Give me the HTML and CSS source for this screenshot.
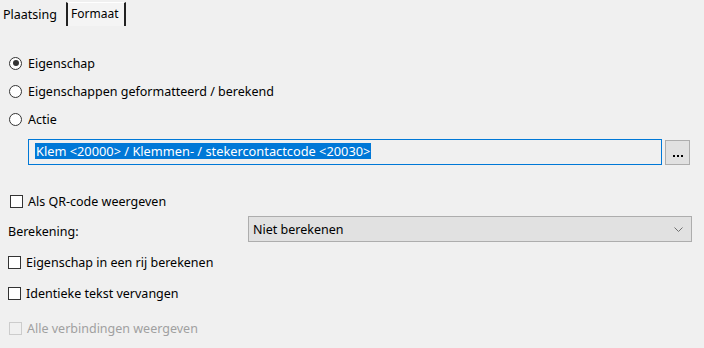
FILE: index.html
```html
<!DOCTYPE html>
<html>
<head>
<meta charset="utf-8">
<link rel="stylesheet" href="styles.css">
</head>
<body>
<div class="tabs">
  <div class="tab active">Plaatsing</div>
  <div class="tab">Formaat</div>
</div>
<div class="panel">
  <div class="radios">
    <label class="row radio-row"><span class="radio checked"></span>Eigenschap</label>
    <label class="row radio-row"><span class="radio"></span>Eigenschappen geformatteerd / berekend</label>
    <label class="row radio-row"><span class="radio"></span>Actie</label>
  </div>
  <div class="field-row">
    <div class="field"><span class="sel">Klem &lt;20000&gt; / Klemmen- / stekercontactcode &lt;20030&gt;</span></div>
    <div class="dots-btn"><svg width="10" height="2" viewBox="0 0 10 2"><rect x="0" y="0" width="2" height="2" fill="#000"/><rect x="4" y="0" width="2" height="2" fill="#000"/><rect x="8" y="0" width="2" height="2" fill="#000"/></svg></div>
  </div>
  <label class="row check-row qr"><span class="check"></span>Als QR-code weergeven</label>
  <div class="calc-row">
    <span class="calc-label">Berekening:</span>
    <div class="select"><span>Niet berekenen</span><svg width="9" height="5" viewBox="0 0 9 5"><path d="M0.5 0.5 L4.5 4.5 L8.5 0.5" fill="none" stroke="#707070" stroke-width="1"/></svg></div>
  </div>
  <label class="row check-row c1"><span class="check"></span>Eigenschap in een rij berekenen</label>
  <label class="row check-row c2"><span class="check"></span>Identieke tekst vervangen</label>
  <label class="row check-row c3 disabled"><span class="check"></span>Alle verbindingen weergeven</label>
</div>
</body>
</html>
```
FILE: styles.css
```css
html, body {
  margin: 0;
  padding: 0;
  background: #f0f0f0;
  font-family: "Noto Sans", "Open Sans", sans-serif;
  font-size: 12.5px;
  color: #000;
  width: 704px;
  height: 348px;
  overflow: hidden;
}
.tabs {
  display: flex;
  height: 27px;
  align-items: flex-start;
  font-size: 12px;
}
.tab {
  box-sizing: border-box;
}
.tab.active {
  padding: 2px 4px 0 3px;
  font-size: 12.5px;
  width: 66px;
  line-height: 26px;
  height: 27px;
}
.tab:not(.active) {
  margin-top: 2px;
  border-left: 2px solid #222;
  border-right: 2px solid #222;
  border-top: 1px solid #fff;
  background: #f4f4f4;
  padding: 0 2px 0 3px;
  width: 60px;
  line-height: 22px;
  height: 24px;
}
.panel {
  display: flex;
  flex-direction: column;
}
.radios {
  display: flex;
  flex-direction: column;
  padding-top: 27px;
  padding-left: 9px;
  gap: 10px;
}
.row {
  display: flex;
  align-items: center;
  height: 18px;
}
.radio {
  width: 13px;
  height: 13px;
  border: 1px solid #333;
  border-radius: 50%;
  box-sizing: border-box;
  margin-right: 6px;
  background: #fff;
  position: relative;
  display: inline-block;
  flex: none;
}
.radio.checked::after {
  content: "";
  position: absolute;
  left: 2.5px; top: 2.5px;
  width: 6px; height: 6px;
  border-radius: 50%;
  background: #333;
}
.field-row {
  display: flex;
  margin-top: 11px;
  margin-left: 28px;
  height: 26px;
  align-items: flex-start;
}
.field {
  width: 634px;
  height: 26px;
  box-sizing: border-box;
  border: 1px solid #0078d7;
  background: #f0f0f0;
  padding: 3px 0 0 6px;
}
.sel {
  display: inline-block;
  background: #0078d7;
  color: #fff;
  line-height: 16px;
  height: 16px;
  padding: 0 1px;
  font-size: 12.8px;
}
.dots-btn {
  width: 25px;
  height: 25px;
  margin-left: 3px;
  margin-top: 1px;
  box-sizing: border-box;
  background: #e1e1e1;
  border: 1px solid #adadad;
  display: flex;
  align-items: flex-end;
  justify-content: center;
  padding-bottom: 7px;
}
.check {
  width: 13px;
  height: 13px;
  border: 1px solid #333;
  box-sizing: border-box;
  background: #fff;
  margin-right: 5px;
  flex: none;
}
.check-row.qr {
  margin-top: 27px;
  margin-left: 10px;
}
.calc-row {
  display: flex;
  align-items: center;
  margin-top: 6px;
  height: 26px;
}
.calc-label {
  margin-left: 8px;
  width: 240px;
  position: relative;
  top: 2px;
}
.select {
  width: 444px;
  height: 26px;
  box-sizing: border-box;
  background: #e1e1e1;
  border: 1px solid #adadad;
  display: flex;
  align-items: center;
  justify-content: space-between;
  padding: 0 8px 0 4px;
}
.check-row.c1 {
  margin-top: 11px;
  margin-left: 8px;
}
.check-row.c2 {
  margin-top: 13px;
  margin-left: 8px;
}
.check-row.c3 {
  margin-top: 17px;
  margin-left: 9px;
}
.disabled { color: #a0a0a0; }
.disabled .check { border-color: #cccccc; background: #f0f0f0; }
```
